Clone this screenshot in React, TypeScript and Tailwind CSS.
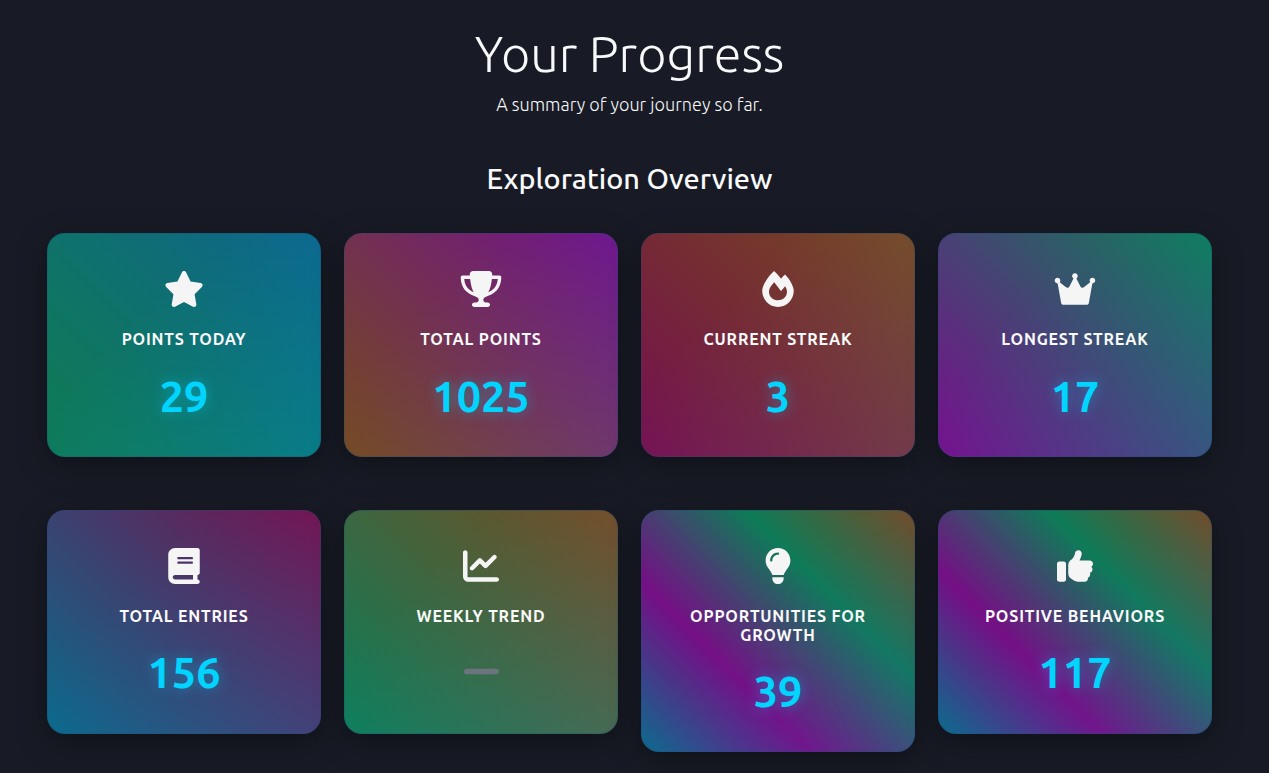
import { FaStar, FaTrophy, FaBook, FaChartLine, FaLightbulb, FaThumbsUp, FaMinus } from "react-icons/fa6";
import { FaFireAlt } from "react-icons/fa";
import type { ComponentType } from "react";

type IconProps = { className?: string };
type Card = { icon: ComponentType<IconProps>; label: string; value?: string; bg: string };

function Crown({ className }: IconProps) {
  return (
    <svg viewBox="0 0 576 512" fill="currentColor" className={className} aria-hidden="true">
      <path d="M576 136c0 22.09-17.91 40-40 40c-.248 0-.4551-.1266-.7031-.1305l-50.52 277.9C482 468.9 468.8 480 453.3 480H122.7c-15.46 0-28.72-11.06-31.48-26.27L40.71 175.9C40.46 175.9 40.25 176 39.1 176c-22.09 0-40-17.91-40-40S17.91 96 39.1 96s40 17.91 40 40c0 8.998-3.521 16.89-8.537 23.57l89.63 71.7c15.91 12.73 39.5 7.544 48.61-10.68l57.6-115.2C255.1 98.34 247.1 86.34 247.1 72C247.1 49.91 265.9 32 288 32s39.1 17.91 39.1 40c0 14.34-7.963 26.34-19.3 33.4l57.6 115.2c9.111 18.22 32.71 23.4 48.61 10.68l89.63-71.7C499.5 152.9 496 144.1 496 136C496 113.9 513.9 96 536 96S576 113.9 576 136z" />
    </svg>
  );
}

const cards: Card[] = [
  { icon: FaStar, label: "Points Today", value: "29", bg: "bg-[linear-gradient(135deg,transparent_35%,rgba(0,145,175,0.38)_100%),linear-gradient(45deg,#0f7a58_0%,#0f785c_20%,#0e648c_100%)]" },
  { icon: FaTrophy, label: "Total Points", value: "1025", bg: "bg-[linear-gradient(135deg,transparent_30%,rgba(90,120,200,0.16)_100%),linear-gradient(45deg,#754823_4%,#701488_96%)]" },
  { icon: FaFireAlt, label: "Current Streak", value: "3", bg: "bg-[linear-gradient(135deg,transparent_30%,rgba(100,120,200,0.16)_100%),linear-gradient(45deg,#75124f_4%,#752b34_48%,#754b22_100%)]" },
  { icon: Crown, label: "Longest Streak", value: "17", bg: "bg-[linear-gradient(135deg,transparent_30%,rgba(30,120,200,0.2)_100%),linear-gradient(45deg,#75128b_4%,#0f7d58_98%)]" },
  { icon: FaBook, label: "Total Entries", value: "156", bg: "bg-[linear-gradient(135deg,transparent_30%,rgba(50,110,200,0.16)_100%),linear-gradient(45deg,#0e6789_4%,#75124f_98%)]" },
  { icon: FaChartLine, label: "Weekly Trend", bg: "bg-[linear-gradient(135deg,transparent_30%,rgba(70,140,200,0.18)_100%),linear-gradient(45deg,#0f7d58_4%,#754b22_98%)]" },
  { icon: FaLightbulb, label: "Opportunities for Growth", value: "39", bg: "bg-[linear-gradient(135deg,transparent_40%,rgba(70,90,210,0.16)_100%),linear-gradient(45deg,#14648c_3%,#750f85_33%,#0e7b58_67%,#754b25_100%)]" },
  { icon: FaThumbsUp, label: "Positive Behaviors", value: "117", bg: "bg-[linear-gradient(135deg,transparent_40%,rgba(70,90,210,0.16)_100%),linear-gradient(45deg,#14648c_3%,#750f85_33%,#0e7b58_67%,#754b25_100%)]" },
];

function StatCard({ icon: Icon, label, value, bg }: Card) {
  return (
    <article className={`flex min-h-[224px] flex-col items-center rounded-[18px] border border-[#1c4f7a]/30 bg-origin-border px-8 pt-[37px] pb-[35px] text-center shadow-[0_8px_30px_rgba(0,0,0,0.35)] ${bg}`}>
      <Icon className="h-[36px] w-[42px] text-[#f5f5f5]" />
      <h3 className="mt-[23px] text-[16px] leading-[19px] font-semibold tracking-[0.8px] text-[#fafafa] uppercase">{label}</h3>
      {value ? (
        <p className="mt-[21.8px] text-[43.2px] leading-[50px] font-bold text-[#00d4ff] [text-shadow:0_0_14px_rgba(0,212,255,0.4)]">{value}</p>
      ) : (
        <FaMinus className="mt-[24px] h-[43px] w-[43px] text-[#6c757d]" />
      )}
    </article>
  );
}

export default function App() {
  return (
    <main className="h-[773px] overflow-hidden bg-[#181b25] pr-[57px] pl-[47px] font-['Ubuntu','Noto_Sans',sans-serif] text-[#f8f9fa]">
      <header className="pt-[21px] text-center">
        <h1 className="text-[50.4px] leading-[66px] font-light">Your Progress</h1>
        <p className="mt-1 text-[18px] leading-[26px] font-light">A summary of your journey so far.</p>
      </header>
      <h2 className="mt-[42px] text-center text-[28.8px] leading-[38px] font-medium">Exploration Overview</h2>
      <section className="mt-[36px] grid grid-cols-4 items-start gap-x-[23px] gap-y-[52.6px] [grid-template-rows:224px_auto]">
        {cards.map((card) => (
          <StatCard key={card.label} {...card} />
        ))}
      </section>
    </main>
  );
}
